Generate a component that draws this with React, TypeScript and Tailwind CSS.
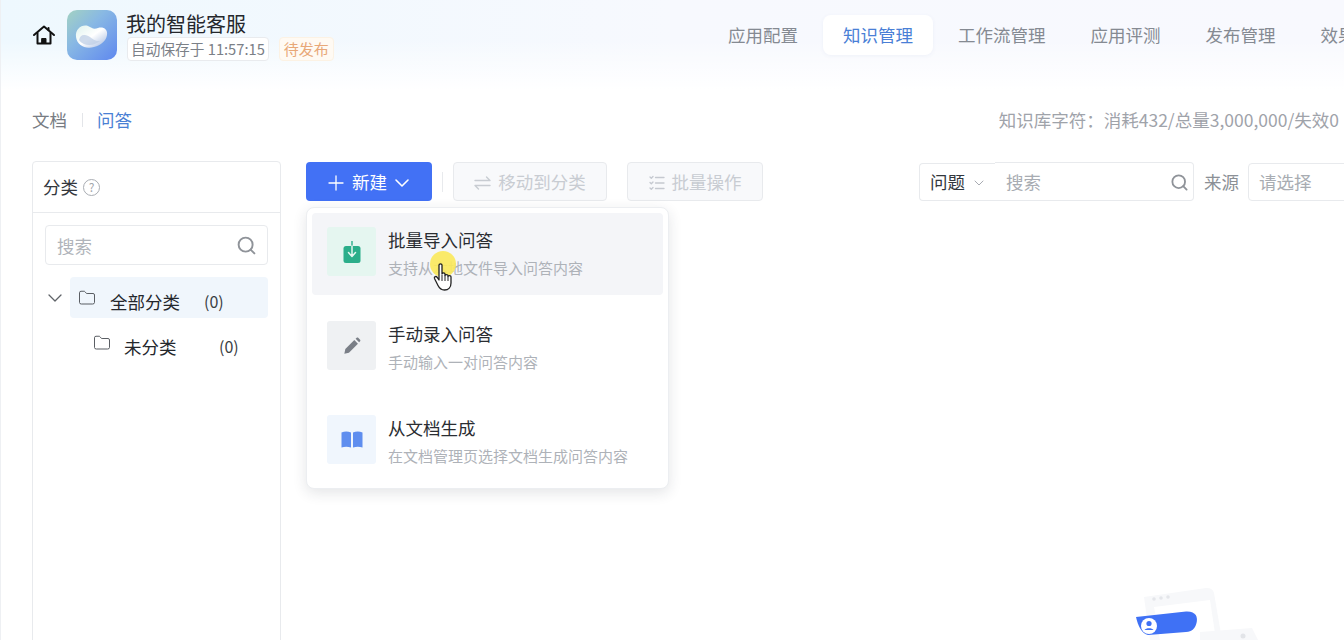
import { ChevronDown, Search, Plus, Folder } from 'lucide-react';

const navItems = ['应用配置', '知识管理', '工作流管理', '应用评测', '发布管理', '效果分析'];

const menuItems = [
    { title: '批量导入问答', desc: '支持从本地文件导入问答内容', box: 'bg-[#e5f6f0]', icon: 'import', active: true },
    { title: '手动录入问答', desc: '手动输入一对问答内容', box: 'bg-[#eff1f3]', icon: 'pen', active: false },
    { title: '从文档生成', desc: '在文档管理页选择文档生成问答内容', box: 'bg-[#f0f6fd]', icon: 'book', active: false },
];

const HomeIcon = () => (
    <svg width="24" height="24" viewBox="0 0 24 24" fill="none" stroke="#111" strokeWidth="2" strokeLinejoin="round" strokeLinecap="round" className="shrink-0">
        <path d="M2 12 L12 3.5 L22 12" />
        <path d="M5.5 10 V20.5 H18.5 V10" />
        <path d="M16.5 5 V7" />
        <rect x="10" y="15.5" width="4" height="5" fill="#111" strokeWidth="1" />
    </svg>
);

const Logo = () => (
    <svg width="50" height="50" viewBox="0 0 50 50" className="rounded-[10px] shrink-0">
        <defs>
            <linearGradient id="logoBg" x1="0" y1="0" x2="1" y2="1">
                <stop offset="0" stopColor="#a3d2c2" />
                <stop offset="0.4" stopColor="#88b8e4" />
                <stop offset="1" stopColor="#5f88ef" />
            </linearGradient>
            <linearGradient id="logoBlob" x1="0" y1="0" x2="1" y2="1">
                <stop offset="0" stopColor="#dff3ee" />
                <stop offset="0.5" stopColor="#ffffff" />
                <stop offset="1" stopColor="#9fb6de" />
            </linearGradient>
        </defs>
        <rect width="50" height="50" fill="url(#logoBg)" />
        <path d="M9 27 C8 19 15 14 21 16 C25 17.5 26 20 31 18 C36 16.5 41 19 40 25 C39 31 34 35 27 37 C18 39.5 10 35 9 27 Z" fill="url(#logoBlob)" />
        <path d="M12 30 C16 36 26 37 33 31 C27 32 24 26 18 25 C15 24.5 13 26 12 30 Z" fill="#bfcfe6" opacity="0.75" />
    </svg>
);

const MenuIcon = ({ name }: { name: string }) => {
    if (name === 'import') {
        return (
            <svg width="18" height="22" viewBox="0 0 18 22" fill="none">
                <rect x="0.5" y="5" width="17" height="17" rx="2.5" fill="#2bae8a" />
                <path d="M9 0 V5" stroke="#2bae8a" strokeWidth="1.4" strokeLinecap="round" />
                <path d="M9 5 V15 M5.5 11.5 L9 15.5 L12.5 11.5" stroke="#e5f6f0" strokeWidth="1.5" strokeLinecap="round" strokeLinejoin="round" />
            </svg>
        );
    }
    if (name === 'pen') {
        return (
            <svg width="18" height="18" viewBox="0 0 20 20" fill="#7a7f87">
                <path d="M1.5 18.5 L2.6 13.4 L12.6 3.4 L16.6 7.4 L6.6 17.4 Z" />
                <path d="M14 2 L15.2 0.9 C15.7 0.4 16.4 0.4 16.9 0.9 L19 3 C19.5 3.5 19.5 4.2 19 4.7 L17.9 5.9 Z" />
            </svg>
        );
    }
    return (
        <svg width="22" height="17" viewBox="0 0 22 17" fill="#5f8eef">
            <path d="M0.5 1.5 C3.5 0 7 0 10 1.5 V16.5 C7 15.5 3.5 15.5 0.5 16.5 Z" />
            <path d="M12 1.5 C15 0 18.5 0 21.5 1.5 V16.5 C18.5 15.5 15 15.5 12 16.5 Z" />
        </svg>
    );
};

const MoveIcon = () => (
    <svg width="17" height="14" viewBox="0 0 17 14" fill="none" stroke="#c8ccd2" strokeWidth="1.4" strokeLinecap="round" strokeLinejoin="round">
        <path d="M1 4.5 H16 L12.5 1" />
        <path d="M16 9.5 H1 L4.5 13" />
    </svg>
);

const BatchIcon = () => (
    <svg width="16" height="16" viewBox="0 0 16 16" fill="none" stroke="#c5c9d0" strokeWidth="1.3" strokeLinecap="round" strokeLinejoin="round">
        <path d="M6.5 2.5 H15 M6.5 8 H15 M6.5 13.5 H15" />
        <path d="M1 2 L2.3 3.3 L4 1.5 M1 7.5 L2.3 8.8 L4 7 M1 13 L2.3 14.3 L4 12.5" />
    </svg>
);

const Illustration = () => (
    <svg width="124" height="54" viewBox="0 0 124 54" fill="none">
        <path d="M8 11 L70 2 C74 1.6 77 3 78 7 L86 54 H14 Z" fill="#f7f8fa" />
        <path d="M18 21 L74 14 L80 54 H24 Z" fill="#ffffff" />
        <circle cx="18" cy="13" r="1.8" fill="#e4e6ea" />
        <circle cx="25" cy="12" r="1.8" fill="#e4e6ea" />
        <circle cx="32" cy="11" r="1.8" fill="#e4e6ea" />
        <path d="M64 46 L116 42 L122 54 H64 Z" fill="#f7f8fa" />
        <circle cx="107" cy="50" r="2.5" fill="#e2e4e8" />
        <path d="M0 31 L50 25.5 C60 25 62 31 60.5 37 C59 43 56 45.5 50 46 L12 49 C6 48 2 40 0 31 Z" fill="#3f71f5" />
        <circle cx="13" cy="40" r="8" fill="#ffffff" />
        <circle cx="13" cy="37.5" r="2.6" fill="#3f71f5" />
        <path d="M8.5 44 C10 41.5 16 41.5 17.5 44 Z" fill="#3f71f5" />
    </svg>
);

const App = () => {
    return (
        <div className="relative w-[1344px] h-[640px] overflow-hidden border-l border-[#eef0f3] bg-[linear-gradient(180deg,rgba(255,255,255,0)_40px,#ffffff_90px),linear-gradient(90deg,#eef8fe,#f7f9fe_50%,#f8f9fe)] text-[#24272c] font-['Noto_Sans_CJK_SC','Noto_Sans',sans-serif]">
            {/* 顶部栏 */}
            <header className="flex items-center h-[70px] pl-[31px]">
                <HomeIcon />
                <div className="ml-[11px] mr-[9px] shrink-0"><Logo /></div>
                <div className="flex flex-col w-[582px] shrink-0">
                    <div className="text-[20px] leading-[26px] mt-[2px]">我的智能客服</div>
                    <div className="flex items-center">
                        <span className="flex items-center h-[24px] px-[3px] ml-[1px] bg-white border border-[#e9ebee] rounded-[4px] text-[14.7px] text-[#7b8087] whitespace-nowrap">自动保存于 11:57:15</span>
                        <span className="flex items-center h-[24px] px-[4px] ml-[10px] bg-[#fffaf3] border border-[#fcf2e4] rounded-[4px] text-[15px] text-[#e8a878] whitespace-nowrap">待发布</span>
                    </div>
                </div>
                <nav className="flex items-center gap-[5px] shrink-0">
                    {navItems.map((item) => (
                        <div
                            key={item}
                            className={`h-[40px] flex items-center px-5 rounded-[8px] text-[17.5px] whitespace-nowrap ${item === '知识管理' ? 'bg-white text-[#4a7fd6] shadow-[0_1px_4px_rgba(60,90,150,0.06)]' : 'text-[#858a92]'}`}
                        >
                            {item}
                        </div>
                    ))}
                </nav>
            </header>

            {/* 文档 / 问答 */}
            <div className="flex items-center justify-between h-[40px] mt-[30px] pl-[31px] pr-[5px]">
                <div className="flex items-center text-[17.5px]">
                    <span className="text-[#777c83]">文档</span>
                    <span className="w-px h-[14px] bg-[#e3e5e9] mx-[14.5px]" />
                    <span className="text-[#4a80d4]">问答</span>
                </div>
                <div className="text-[17.5px] text-[#9fa3aa] whitespace-nowrap">知识库字符：消耗432/总量3,000,000/失效0</div>
            </div>

            <div className="flex mt-[21px] pl-[31px] items-start">
                {/* 分类 */}
                <aside className="w-[249px] h-[500px] shrink-0 border border-[#e8eaed] rounded-[4px] bg-white">
                    <div className="flex items-center h-[51px] pl-[10px] border-b border-[#e8eaed] text-[17.5px] text-[#33373d]">
                        分类
                        <span className="ml-[5px] w-[17px] h-[17px] rounded-full border border-[#a9adb3] flex items-center justify-center text-[12px] leading-none text-[#a2a6ac]">?</span>
                    </div>
                    <div className="px-[12px] pt-[12px]">
                        <div className="flex items-center justify-between h-[40px] pl-[11px] pr-[10px] border border-[#e8eaed] rounded-[4px]">
                            <span className="text-[17.5px] text-[#b0b4ba] pt-[2px]">搜索</span>
                            <Search size={21} strokeWidth={2.2} className="text-[#8f9399]" />
                        </div>
                        <div className="flex items-center mt-[12px] -ml-[2px]">
                            <ChevronDown size={24} strokeWidth={1.3} className="text-[#5f6368] mr-[3px] shrink-0" />
                            <div className="flex items-start w-[198px] h-[41px] rounded-[4px] bg-[#f0f6fc] pl-[8px]">
                                <Folder size={18} strokeWidth={1.3} className="text-[#55595f] mt-[12px] shrink-0" />
                                <span className="ml-[14px] text-[17.5px] mt-[12px] leading-[26px] w-[94px]">全部分类</span>
                                <span className="text-[16px] mt-[12px] leading-[24px] text-[#3a3e44]">(0)</span>
                            </div>
                        </div>
                        <div className="flex items-start h-[41px] pl-[48px] mt-[4px]">
                            <Folder size={18} strokeWidth={1.3} className="text-[#55595f] mt-[12px] shrink-0" />
                            <span className="ml-[13px] text-[17.5px] mt-[12px] leading-[26px] w-[95px]">未分类</span>
                            <span className="text-[16px] mt-[12px] leading-[24px] text-[#3a3e44]">(0)</span>
                        </div>
                    </div>
                </aside>

                {/* 工具栏 */}
                <div className="flex items-center h-[39px] ml-[25px] mt-[1px] shrink-0">
                    <button className="flex items-center justify-center w-[126px] h-[39px] pt-[2px] rounded-[4px] bg-[#4271f5] text-white text-[17.5px]">
                        <Plus size={24} strokeWidth={1.3} />
                        <span className="ml-[4px] mr-[3px]">新建</span>
                        <ChevronDown size={24} strokeWidth={1.6} />
                    </button>
                    <span className="w-px h-[20px] bg-[#e8eaed] mx-[10px]" />
                    <button className="flex items-center justify-center w-[154px] h-[39px] pt-[2px] rounded-[4px] border border-[#e8eaed] bg-[#f8f9fb] text-[#c8ccd2] text-[17.5px]">
                        <MoveIcon />
                        <span className="ml-[7px]">移动到分类</span>
                    </button>
                    <button className="flex items-center justify-center w-[136px] h-[39px] pt-[2px] ml-[20px] rounded-[4px] border border-[#e8eaed] bg-[#f8f9fb] text-[#c8ccd2] text-[17.5px]">
                        <BatchIcon />
                        <span className="ml-[7px]">批量操作</span>
                    </button>

                    <div className="flex items-center h-[38px] w-[76px] ml-[156px] pl-[10px] pt-[2px] border border-r-0 border-[#e8eaed] rounded-l-[4px] bg-white">
                        <span className="text-[17.5px] text-[#33373d]">问题</span>
                        <ChevronDown size={16} strokeWidth={1.3} className="ml-[6px] text-[#9a9ea6]" />
                    </div>
                    <div className="flex items-center justify-between h-[39px] w-[199px] pl-[11px] pr-[4px] pt-[1px] border border-l-0 border-[#e8eaed] rounded-r-[4px] bg-white">
                        <span className="text-[17.5px] text-[#a8acb2]">搜索</span>
                        <Search size={19} strokeWidth={2.3} className="text-[#8f9399]" />
                    </div>
                    <span className="ml-[10px] pt-[2px] text-[17.5px] text-[#8b9096]">来源</span>
                    <div className="flex items-center h-[38px] w-[130px] ml-[9px] pl-[10px] pt-[2px] border border-[#e8eaed] rounded-[4px] bg-white shrink-0">
                        <span className="text-[17.5px] text-[#a8acb2]">请选择</span>
                    </div>
                </div>
            </div>

            {/* 新建下拉菜单 */}
            <div className="absolute left-[305px] top-[207px] w-[363px] h-[282px] p-[5px] rounded-[8px] bg-white border border-[#eceef1] shadow-[0_4px_14px_rgba(30,40,60,0.12)] flex flex-col gap-[12px]">
                {menuItems.map((item) => (
                    <div key={item.title} className={`flex items-center h-[82px] px-[15px] pb-[5px] rounded-[4px] ${item.active ? 'bg-[#f4f5f8]' : ''}`}>
                        <div className={`w-[49px] h-[49px] rounded-[3px] flex items-center justify-center shrink-0 ${item.box}`}>
                            <MenuIcon name={item.icon} />
                        </div>
                        <div className="ml-[12px] mt-[2px]">
                            <div className="text-[17.5px] leading-[26px] text-[#2a2d32]">{item.title}</div>
                            <div className="text-[15px] leading-[22px] mt-[4px] text-[#aeb2b8]">{item.desc}</div>
                        </div>
                    </div>
                ))}
            </div>

            {/* 鼠标高亮 */}
            <div className="absolute left-[429px] top-[251px] w-[26px] h-[26px] rounded-full bg-[#fbe95a] opacity-90" />
            <svg className="absolute left-[432px] top-[263px]" width="22" height="28" viewBox="0 0 22 28">
                <path d="M6 2 C6 0.6 9 0.6 9 2 V11 C9 9.6 12 9.6 12 11 V12.5 C12 11.2 15 11.2 15 12.5 V13.5 C15 12.4 18 12.4 18 13.8 V20 C18 24 15.5 27 11.5 27 C8 27 6.5 25.5 5 22.5 L1.5 15.5 C0.8 13.8 3.2 12.8 4.2 14.3 L6 17 Z" fill="#fff" stroke="#222" strokeWidth="1.3" strokeLinejoin="round" />
                <path d="M9 12 V18 M12 12.5 V18 M15 13.5 V18" stroke="#222" strokeWidth="1" />
            </svg>

            {/* 右下角插图 */}
            <div className="absolute left-[1135px] top-[586px]"><Illustration /></div>
        </div>
    );
};

export default App;
